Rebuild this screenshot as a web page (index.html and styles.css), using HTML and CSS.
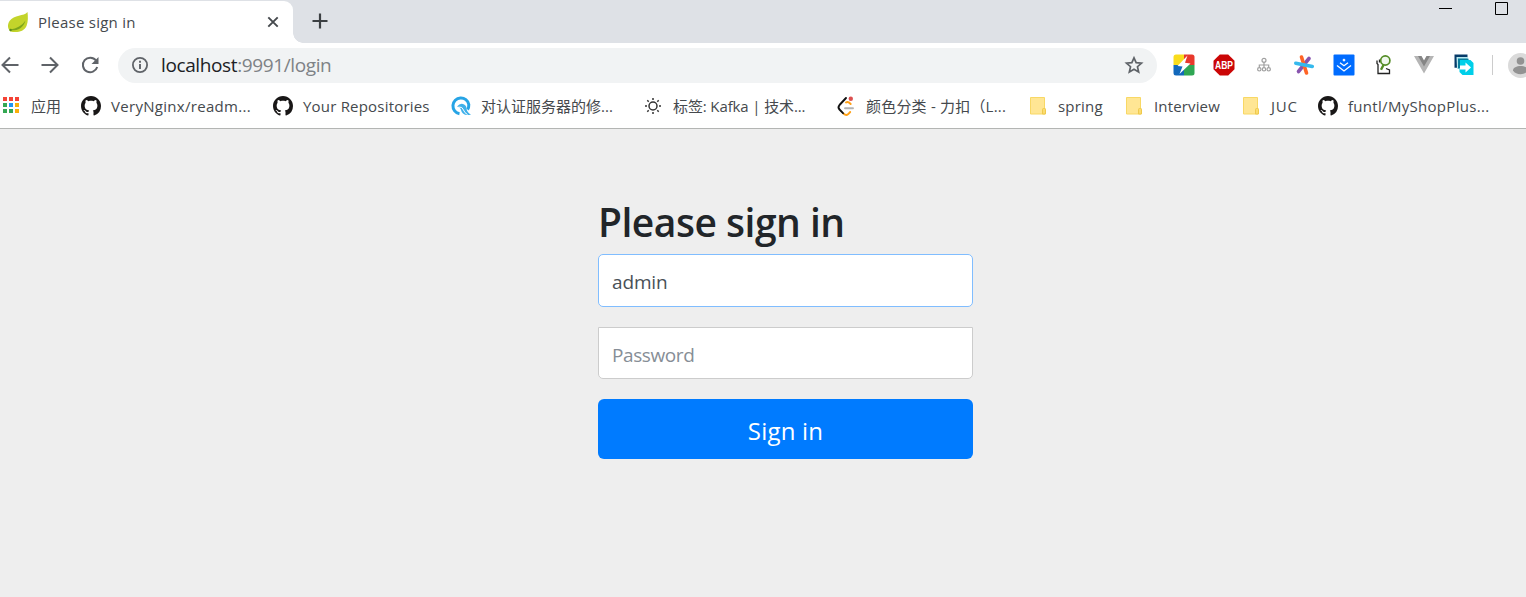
FILE: index.html
```html
<!DOCTYPE html>
<html lang="zh-CN">
<head>
<meta charset="utf-8">
<title>Please sign in</title>
<link rel="stylesheet" href="styles.css">
</head>
<body>
<svg width="0" height="0" class="defs" aria-hidden="true">
  <symbol id="github" viewBox="0 0 16 16"><path fill="#191717" fill-rule="evenodd" d="M8 0C3.58 0 0 3.58 0 8c0 3.54 2.29 6.53 5.47 7.59.4.07.55-.17.55-.38 0-.19-.01-.82-.01-1.49-2.01.37-2.53-.49-2.69-.94-.09-.23-.48-.94-.82-1.13-.28-.15-.68-.52-.01-.53.63-.01 1.08.58 1.23.82.72 1.21 1.87.87 2.33.66.07-.52.28-.87.51-1.07-1.78-.2-3.64-.89-3.64-3.95 0-.87.31-1.59.82-2.15-.08-.2-.36-1.02.08-2.12 0 0 .67-.21 2.2.82.64-.18 1.32-.27 2-.27s1.36.09 2 .27c1.53-1.04 2.2-.82 2.2-.82.44 1.1.16 1.92.08 2.12.51.56.82 1.27.82 2.15 0 3.07-1.87 3.75-3.65 3.95.29.25.54.73.54 1.48 0 1.07-.01 1.93-.01 2.2 0 .21.15.46.55.38A8.01 8.01 0 0 0 16 8c0-4.42-3.58-8-8-8z"/></symbol>
  <symbol id="folder" viewBox="0 0 20 20"><path fill="#ffe694" stroke="#f8d865" d="M2.500 1.500h14v11h.5v5.500H2.500z"/><path fill="#fbdc70" stroke="#efc94c" d="M14.500 18v-4.500q0-1 1-1h1q1 0 1 1V18z"/></symbol>
</svg>
<header class="browser">
  <div class="tabstrip">
    <div class="tab">
      <svg class="leaf" width="22" height="22" viewBox="0 0 22 22"><path fill="#c3d42b" d="M20.500 1C17 5.500 7 3.500 2.500 10c-2.500 4-1.700 8 1 10.500 6 1.500 13.500.5 16-5.500 1.800-4.500 1.500-9.500 1-14z"/><path fill="#7ca51c" d="M3 18.500c7-1 12-4 15.500-9-2 7-7 10-14 10z"/><circle cx="3.600" cy="19" r="1.200" fill="#5d8d1a"/></svg>
      <span class="tab-title">Please sign in</span>
      <svg class="close" width="12" height="12" viewBox="0 0 12 12"><path stroke="#45494d" stroke-width="1.900" d="M1.300 1.300l9.400 9.400M10.700 1.300l-9.400 9.400"/></svg>
    </div>
    <div class="tab-foot"></div>
    <svg class="plus" width="16" height="16" viewBox="0 0 16 16"><path stroke="#3c4043" stroke-width="2.200" d="M8 .5v15M.5 8h15"/></svg>
    <div class="window-controls">
      <svg width="13" height="13" viewBox="0 0 13 13"><path stroke="#000" d="M0 6.500h13"/></svg>
      <svg width="13" height="13" viewBox="0 0 13 13"><path fill="none" stroke="#000" d="M.5.5h12v12H.5z"/></svg>
    </div>
  </div>
  <div class="toolbar">
    <div class="nav">
      <svg width="20" height="20" viewBox="0 0 20 20"><path fill="none" stroke="#5f6368" stroke-width="2" d="M18.500 10H3M10 2.500L2.500 10l7.500 7.500"/></svg>
      <svg width="20" height="20" viewBox="0 0 20 20"><path fill="none" stroke="#5f6368" stroke-width="2" d="M1.500 10H17M10 2.500l7.500 7.500-7.500 7.500"/></svg>
      <svg width="20" height="20" viewBox="0 0 20 20"><path fill="none" stroke="#5f6368" stroke-width="2" d="M16 5.500A7.300 7.300 0 1 0 17.200 12"/><path fill="#5f6368" d="M18.500 2v7h-7z"/></svg>
    </div>
    <div class="omnibox">
      <svg width="18" height="18" viewBox="0 0 18 18"><circle cx="9" cy="9" r="7.100" fill="none" stroke="#5f6368" stroke-width="1.800"/><path stroke="#5f6368" stroke-width="1.900" d="M9 8v5M9 4.700v2"/></svg>
      <span class="url"><b>localhost</b>:9991/login</span>
      <svg class="star" width="18" height="18" viewBox="0 0 18 18"><path fill="none" stroke="#5f6368" stroke-width="1.700" d="M9 1.800l2.150 4.900 5.350.5-4.050 3.500 1.200 5.200L9 13.150 4.350 15.900l1.200-5.200L1.500 7.200l5.350-.5z"/></svg>
    </div>
    <div class="extensions">
      <svg width="22" height="22" viewBox="0 0 22 22"><path fill="#f9dc1c" d="M3 .5h8V11H.5V3Q.5.500 3 .5z"/><path fill="#e8382c" d="M11 .5h8q2.500 0 2.500 2.500v8H11z"/><path fill="#1268bb" d="M.5 11H11v10.500H3Q.5 21.500.5 19z"/><path fill="#2fa653" d="M11 11h10.500v8q0 2.500-2.500 2.500h-8z"/><path fill="#fff" d="M14.500 1.500L4.500 12l5 .5-3 7.500L17.500 9.500l-5.500-.7z"/></svg>
      <svg width="22" height="22" viewBox="0 0 22 22"><path fill="#cb0606" d="M6.800.5h8.400l6.300 6.300v8.400l-6.300 6.300H6.800L.5 15.200V6.800z"/><text class="abp" x="2" y="15" textLength="18" lengthAdjust="spacingAndGlyphs">ABP</text></svg>
      <svg width="22" height="22" viewBox="0 0 22 22"><g fill="none" stroke="#a0a0a0" stroke-width="1.200"><circle cx="11" cy="6.300" r="2"/><circle cx="6.300" cy="15.300" r="1.700"/><circle cx="11" cy="15.300" r="1.700"/><circle cx="15.700" cy="15.300" r="1.700"/><path d="M11 8.500v5M6.300 13.500V11h9.400v2.500"/></g></svg>
      <svg width="22" height="22" viewBox="0 0 22 22"><g stroke-width="3.600" stroke-linecap="round"><path stroke="#8854ae" d="M16 4.500l-10.500 13"/><path stroke="#ff6426" d="M8.500 3l5 16"/><path stroke="#35b9ed" d="M2.800 9.200l16.500 3.300"/></g></svg>
      <svg width="22" height="22" viewBox="0 0 22 22"><rect x=".5" y=".5" width="21" height="21" rx="1" fill="#006cff"/><g fill="none" stroke="#fff" stroke-width="1.300"><path d="M7 8.700l4 3 4-3M4 11.500l7 5.500 7-5.500"/></g><path fill="#fff" d="M11 4.500l1.600 1.600L11 7.700 9.400 6.100z"/></svg>
      <svg width="22" height="22" viewBox="0 0 22 22"><path fill="none" stroke="#222" stroke-width="1.300" d="M6.500 5.500v3M4 6.500v3l1 1V19.500h11.500v-3.500L13 14.500"/><circle cx="12.300" cy="6.500" r="4.600" fill="#eff8ec" stroke="#538c25" stroke-width="1.700"/><path stroke="#538c25" stroke-width="2.400" d="M10.500 11L8 15.700"/></svg>
      <svg width="22" height="22" viewBox="0 0 22 22"><path fill="#b5b5b5" d="M1 2h7l3 5 3-5h7L11 19.500z"/><path fill="#858585" d="M5 2h3.500L11 6.500 13.500 2H17l-6 10.500z"/></svg>
      <svg width="22" height="22" viewBox="0 0 22 22"><path fill="#063b69" d="M1.500.5h13v3H5v10.200H1.500z"/><path fill="#b8e8ef" d="M3.500 3h11l2 2.500H6V15H4z"/><path fill="#087f9e" d="M5 4.500h9.500l2 2H8v8H5z"/><path fill="#00cfe9" d="M7 6h10.500L20.500 9v12H9.500L6.500 18v-3.500H7z"/><path fill="#fff" d="M7 11.500h5.500V8.500l5.500 5-5.500 5v-3H7z"/></svg>
    </div>
    <div class="divider"></div>
    <svg class="avatar" width="25" height="25" viewBox="0 0 25 25"><circle cx="12.500" cy="12.500" r="12.500" fill="#dadada"/><circle cx="12.500" cy="8" r="3.800" fill="#929292"/><path fill="#929292" d="M5 17.500c0-6 15-6 15 0-3 5-12 5-15 0z"/></svg>
  </div>
  <nav class="bookmarks">
    <a><svg width="20" height="20" viewBox="0 0 20 20"><g fill="#f44336"><path d="M2 1h4v4H2zM8 1h4v4H8zM14 1h4v4h-4z"/></g><path fill="#34a853" d="M2 7h4v4H2zM2 13h4v4H2zM8 13h4v4H8z"/><path fill="#2196f3" d="M8 7h4v4H8z"/><path fill="#fbaf0a" d="M14 7h4v4h-4zM14 13h4v4h-4z"/></svg><span>应用</span></a>
    <a><svg width="20" height="20"><use href="#github"/></svg><span class="w-nginx">VeryNginx/readm...</span></a>
    <a><svg width="20" height="20"><use href="#github"/></svg><span class="w-repos">Your Repositories</span></a>
    <a><svg width="20" height="20" viewBox="0 0 20 20"><path fill="none" stroke="#27a4e5" stroke-width="3" d="M8.500 17.800A8 8 0 1 1 17.800 8.500Q18 11.500 16.500 13.500"/><path fill="#3fb0ea" d="M6 10.500q3-3.500 6-2.500 3.500 1 3.500 4.500.5 4 4.500 6-5 1.500-8-1-1.500-1.500-2-3.500-.7-3-4-3.500z"/><path fill="none" stroke="#fff" d="M7.500 11q4-.5 5 3 1 3 4 4.500"/></svg><span class="w-auth">对认证服务器的修...</span></a>
    <a><svg width="20" height="20" viewBox="0 0 20 20"><g fill="none" stroke="#333" stroke-width="1.500"><circle cx="10" cy="10" r="4"/><path d="M10 2v2M10 16v2M2 10h2M16 10h2M4.300 4.300l1.400 1.400M14.300 14.300l1.400 1.400M15.700 4.300l-1.400 1.400M5.700 14.300l-1.400 1.400"/></g></svg><span class="w-kafka">标签: Kafka | 技术...</span></a>
    <a><svg width="20" height="20" viewBox="0 0 20 20"><g fill="none" stroke-width="1.900" stroke-linecap="round"><path stroke="#ffa116" d="M7.500 17.500q2.500 2.500 4.500.8l2.200-2.300M10 6.500q2-1.500 4.700 1.500"/><path stroke="#b3b3b3" d="M9 12.200h8"/><path stroke="#111" d="M10 2L3.500 9q-2 2.300 0 4.500L7 17.200"/></g><circle cx="14.800" cy="2.800" r="2.200" fill="#dc5050"/></svg><span class="w-leet">颜色分类 - 力扣（L...</span></a>
    <a><svg width="20" height="20"><use href="#folder"/></svg><span class="w-spring">spring</span></a>
    <a><svg width="20" height="20"><use href="#folder"/></svg><span class="w-interview">Interview</span></a>
    <a><svg width="20" height="20"><use href="#folder"/></svg><span class="w-juc">JUC</span></a>
    <a><svg width="20" height="20"><use href="#github"/></svg><span class="w-shop">funtl/MyShopPlus...</span></a>
  </nav>
</header>
<main class="page">
  <form class="signin">
    <h1>Please sign in</h1>
    <input class="field username" type="text" value="admin">
    <input class="field password" type="password" placeholder="Password">
    <button type="button">Sign in</button>
  </form>
</main>
</body>
</html>
```

FILE: styles.css
```css
* { box-sizing: border-box; }
body {
  margin: 0;
  min-height: 597px;
  background: #eee;
  overflow: hidden;
  font-family: "Open Sans", "Noto Sans CJK SC", sans-serif;
}
svg { display: block; flex: none; overflow: visible; }
.defs { position: absolute; }

.browser { background: #fff; border-bottom: 1px solid #b3b5b3; height: 129px; }

.tabstrip { display: flex; height: 43px; background: #dee1e6; padding-top: 1px; }
.tab {
  display: flex;
  align-items: center;
  width: 293px;
  padding: 0 14px 0 7px;
  background: #fff;
  border-radius: 0 9px 0 0;
}
.tab-title { margin-left: 9px; font-size: 15px; color: #45494d; letter-spacing: .25px; white-space: nowrap; }
.close { margin-left: auto; }
.tab-foot {
  align-self: flex-end;
  width: 10px;
  height: 10px;
  background: radial-gradient(circle at 100% 0, #dee1e6 9.500px, #fff 10px);
}
.plus { margin: 12px 0 0 9px; }
.window-controls { display: flex; gap: 43px; margin: 1px 18px 0 auto; }

.toolbar { display: flex; align-items: center; height: 44px; overflow: hidden; }
.nav { display: flex; gap: 20px; }
.omnibox {
  display: flex;
  flex: none;
  align-items: center;
  width: 1039px;
  height: 35px;
  margin-left: 18px;
  padding: 0 14px 0 13px;
  border-radius: 18px;
  background: #f1f3f4;
}
.url { margin-left: 12px; font-size: 19px; letter-spacing: -.38px; color: #7e8286; white-space: nowrap; }
.url b { font-weight: 400; color: #202124; }
.star { margin-left: auto; }
.extensions { display: flex; gap: 18px; margin-left: 16px; }
.abp { font: bold 11px "Liberation Sans", sans-serif; fill: #fff; }
.divider { flex: none; width: 1px; height: 20px; margin-left: 17px; background: #ccc; }
.avatar { margin-left: 15px; }

.bookmarks {
  display: grid;
  grid-template-columns: 80px 192px 178px 192px 193px 192px 96px 117px 77px 190px;
  align-items: center;
  height: 38px;
  padding-left: 1px;
}
.bookmarks a { display: flex; align-items: center; gap: 10px; font-size: 15px; line-height: 20px; color: #45494d; white-space: nowrap; }
.bookmarks span { margin-top: -1px; }
.w-nginx, .w-shop { letter-spacing: .3px; }
.w-repos, .w-spring { letter-spacing: .2px; }
.w-leet { letter-spacing: .2px; }
.w-interview { letter-spacing: .15px; }
.w-juc { letter-spacing: .8px; }
.w-kafka { letter-spacing: -.12px; }

.page { display: flex; justify-content: center; padding: 69px 0 0 45px; }
.signin { display: flex; flex-direction: column; width: 375px; }
h1 { margin: 0 0 8px; font-size: 39px; line-height: 48px; font-weight: 550; color: #212529; letter-spacing: -.5px; white-space: nowrap; }
.field {
  width: 375px;
  padding: 2px 13px 0;
  border: 1px solid #ccc;
  outline: 0;
  background: #fff;
  font-family: inherit;
  font-size: 19px;
  color: #495057;
}
.field::placeholder { color: #868e96; opacity: 1; }
.username { height: 53px; margin-bottom: 20px; border-color: #80bdff; border-radius: 5px; letter-spacing: -.15px; }
.password { height: 52px; margin-bottom: 20px; padding-top: 4px; border-radius: 0 0 5px 5px; letter-spacing: -.4px; }
button {
  height: 60px;
  padding: 3px 0 0;
  border: 0;
  border-radius: 6px;
  background: #007bff;
  color: #fff;
  font-family: inherit;
  font-size: 24px;
  letter-spacing: .2px;
}
```
